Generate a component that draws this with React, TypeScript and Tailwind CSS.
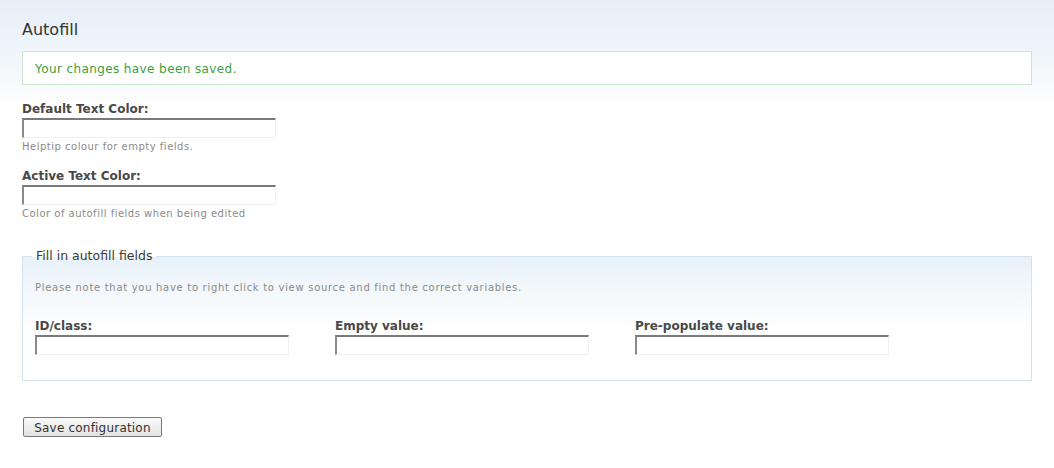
import React from "react";

const font = { fontFamily: '"DejaVu Sans", Verdana, sans-serif' };

function Field({ label, className = "" }: { label: string; className?: string }) {
  return (
    <div className={className}>
      <div className="text-[12px] leading-[16px] font-bold text-[#494949]">{label}</div>
      <input
        type="text"
        className="mt-[1px] block h-[20px] w-[254px] border-t-2 border-l-2 border-r border-b border-t-[#7a7a7a] border-l-[#8a8a8a] border-r-[#f1f1f1] border-b-[#f1f1f1] bg-white outline-none"
      />
    </div>
  );
}

export default function App() {
  return (
    <div
      className="min-h-[468px] w-full bg-[linear-gradient(to_bottom,#e6eff8_0px,#f1f6fb_60px,#ffffff_110px)] px-[22px] pt-[20px] text-[#494949]"
      style={font}
    >
      <h1 className="text-[16px] leading-[20px] font-normal text-[#333333]">Autofill</h1>

      <div className="mt-[11px] flex h-[34px] items-center border border-[#cde8cd] bg-[#fefffe] px-[12px] pt-[1px] text-[12px] tracking-[0.4px] text-[#3e9e3e]">
        Your changes have been saved.
      </div>

      <Field label="Default Text Color:" className="mt-[16px]" />
      <div className="mt-[2px] text-[10px] leading-[14px] tracking-[0.5px] text-[#8a8a8a]">Helptip colour for empty fields.</div>

      <Field label="Active Text Color:" className="mt-[14px]" />
      <div className="mt-[2px] text-[10px] leading-[14px] tracking-[0.5px] text-[#8a8a8a]">Color of autofill fields when being edited</div>

      <fieldset className="mt-[27px] border border-[#d5e3ee] bg-[linear-gradient(to_bottom,#e8f1f9_0px,#f5f9fc_40px,#ffffff_75px)] px-[12px] pb-[25px]">
        <legend className="ml-[-3px] px-[4px] text-[12.5px] leading-[16px] text-[#3a3a3a]">Fill in autofill fields</legend>
        <div className="mt-[17px] text-[10px] leading-[14px] tracking-[0.7px] text-[#8a8a8a]">
          Please note that you have to right click to view source and find the correct variables.
        </div>
        <div className="mt-[23px] flex gap-[46px]">
          <Field label="ID/class:" />
          <Field label="Empty value:" />
          <Field label="Pre-populate value:" />
        </div>
      </fieldset>

      <button className="mt-[36px] ml-[1px] block h-[20px] w-[139px] rounded-[2px] border border-[#7a7a7a] bg-[linear-gradient(to_bottom,#fafafa,#e2e2e2)] pt-[1px] text-[12px] leading-[18px] tracking-[0.2px] text-[#333333]">
        Save configuration
      </button>
    </div>
  );
}
